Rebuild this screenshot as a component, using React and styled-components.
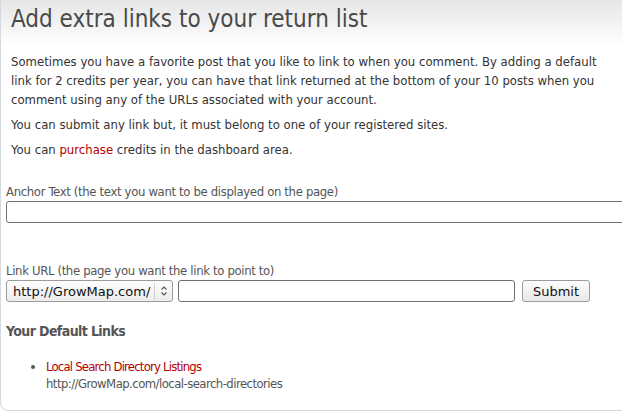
import React from 'react';
import styled, { createGlobalStyle } from 'styled-components';

// -- Global
const GlobalStyle = createGlobalStyle`
  html, body {
    margin: 0;
    padding: 0;
    background: #ffffff;
    overflow: hidden;
  }
  body {
    font-family: "DejaVu Sans", sans-serif;
    font-stretch: condensed;
    color: #333333;
  }
`;

// -- Styled components
const Card = styled.div`
  width: 660px;
  height: 411px;
  box-sizing: border-box;
  border: 1px solid #d3d9e0;
  border-top: none;
  border-radius: 0 0 8px 8px;
  background: linear-gradient(#e6e6e6 0px, #ffffff 46px);
`;

const Title = styled.h1`
  margin: 0;
  padding: 4px 0 0 10px;
  font-size: 24px;
  font-weight: normal;
  line-height: 30px;
  color: #4a4a4a;
`;

const Intro = styled.div`
  padding: 18px 0 0 10px;
  width: 600px;
`;

const P = styled.p`
  margin: 0 0 6px;
  font-size: 13px;
  line-height: 19px;
  color: #333333;
`;

const Red = styled.a`
  color: #b30000;
  text-decoration: none;
`;

const Field = styled.div`
  padding: 0 0 0 5px;
  margin-top: ${(p) => p.top}px;
`;

const Label = styled.label`
  display: block;
  font-size: 13px;
  letter-spacing: -0.35px;
  line-height: 18px;
  color: #555555;
`;

const Row = styled.div`
  display: flex;
  align-items: center;
  gap: 5px;
`;

const Input = styled.input`
  box-sizing: border-box;
  width: ${(p) => p.w}px;
  height: 22px;
  border: 1px solid #6f6f6f;
  border-radius: 3px;
  padding: 1px 4px;
  font-family: "DejaVu Sans", sans-serif;
  font-stretch: normal;
  font-size: 13px;
  background: #ffffff;
`;

const SelectBox = styled.div`
  position: relative;
  width: 167px;
  height: 22px;
`;

const Select = styled.select`
  appearance: none;
  box-sizing: border-box;
  width: 100%;
  height: 100%;
  padding: 0 14px 0 6px;
  border: 1px solid #9a9a9a;
  border-radius: 3px;
  background: linear-gradient(#fdfdfd, #ececec);
  font-family: "DejaVu Sans", sans-serif;
  font-stretch: normal;
  font-size: 13px;
  color: #111111;
`;

const SelectArrow = styled.span`
  position: absolute;
  top: 3px;
  right: 1px;
  width: 17px;
  height: 16px;
  border-left: 1px solid #cfcfcf;
  display: flex;
  align-items: center;
  justify-content: center;
  pointer-events: none;
`;

const Button = styled.button`
  box-sizing: border-box;
  margin-left: 2px;
  width: 68px;
  height: 22px;
  padding: 0;
  font-family: "DejaVu Sans", sans-serif;
  font-stretch: normal;
  font-size: 13px;
  color: #111111;
  border: 1px solid #9a9a9a;
  border-radius: 3px;
  background: linear-gradient(#fdfdfd, #e8e8e8);
`;

const H3 = styled.h3`
  margin: 19px 0 0 5px;
  font-size: 14px;
  letter-spacing: -0.6px;
  font-weight: bold;
  line-height: 20px;
  color: #555555;
`;

const List = styled.ul`
  margin: 17px 0 0;
  padding-left: 45px;
  font-size: 13px;
  line-height: 17px;
  color: #555555;
`;

const ItemTitle = styled(Red)`
  letter-spacing: -0.8px;
`;

const Url = styled.div`
  letter-spacing: -0.55px;
  color: #555555;
`;
//---------------------------------------

const App = () => {
  return (
    <>
      <GlobalStyle />
      <Card>
        <Title>Add extra links to your return list</Title>
        <Intro>
          <P>
            Sometimes you have a favorite post that you like to link to when you comment. By adding a default
            link for 2 credits per year, you can have that link returned at the bottom of your 10 posts when you
            comment using any of the URLs associated with your account.
          </P>
          <P>You can submit any link but, it must belong to one of your registered sites.</P>
          <P>
            You can <Red href="#">purchase</Red> credits in the dashboard area.
          </P>
        </Intro>
        <Field top={24}>
          <Label>Anchor Text (the text you want to be displayed on the page)</Label>
          <Input w={640} />
        </Field>
        <Field top={39}>
          <Label>Link URL (the page you want the link to point to)</Label>
          <Row>
            <SelectBox>
              <Select defaultValue="growmap">
                <option value="growmap">http://GrowMap.com/</option>
              </Select>
              <SelectArrow>
                <svg width="8" height="12" viewBox="0 0 8 12" fill="none" stroke="#555" strokeWidth="1.1">
                  <path d="M1.5 4.5 L4 2 L6.5 4.5" />
                  <path d="M1.5 7.5 L4 10 L6.5 7.5" />
                </svg>
              </SelectArrow>
            </SelectBox>
            <Input w={337} />
            <Button>Submit</Button>
          </Row>
        </Field>
        <H3>Your Default Links</H3>
        <List>
          <li>
            <ItemTitle href="#">Local Search Directory Listings</ItemTitle>
            <Url>http://GrowMap.com/local-search-directories</Url>
          </li>
        </List>
      </Card>
    </>
  );
};

export default App;
